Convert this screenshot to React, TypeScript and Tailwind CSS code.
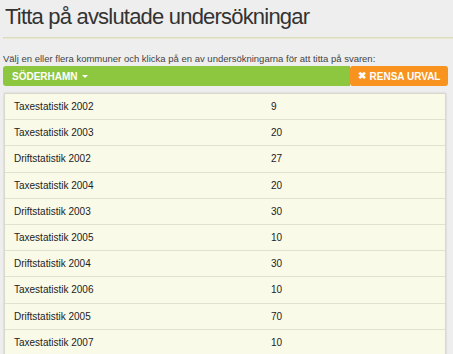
import React from 'react';

interface Survey {
  name: string;
  count: number;
}

const surveys: Survey[] = [
  { name: 'Taxestatistik 2002', count: 9 },
  { name: 'Taxestatistik 2003', count: 20 },
  { name: 'Driftstatistik 2002', count: 27 },
  { name: 'Taxestatistik 2004', count: 20 },
  { name: 'Driftstatistik 2003', count: 30 },
  { name: 'Taxestatistik 2005', count: 10 },
  { name: 'Driftstatistik 2004', count: 30 },
  { name: 'Taxestatistik 2006', count: 10 },
  { name: 'Driftstatistik 2005', count: 70 },
  { name: 'Taxestatistik 2007', count: 10 },
];

const App: React.FC = () => {
  return (
    <div className="h-[354px] w-[453px] overflow-hidden bg-[#eeeeee] font-['Liberation_Sans',Arial,sans-serif] text-[#333]">
      <h1 className="pl-[5px] pt-[2px] text-[22px] font-normal leading-[30px] tracking-[-0.8px] text-[#333]">
        Titta på avslutade undersökningar
      </h1>
      <div className="ml-[3px] mt-[5px] h-[2px] border-t border-[#dcdcbf] bg-[#e6e7cc]" />
      <p className="mt-[14px] pl-[3px] text-[9.5px] leading-[12px] text-[#444]">
        Välj en eller flera kommuner och klicka på en av undersökningarna för att titta på svaren:
      </p>
      <div className="ml-[3px] mr-[5px] mt-[1px] flex h-[20px]">
        <button
          type="button"
          className="flex flex-1 items-center rounded-l-[3px] bg-[#8dc63f] pl-[9px] text-[10px] font-bold text-white"
        >
          SÖDERHAMN
          <span className="ml-[4px] inline-block h-0 w-0 border-x-[3px] border-t-[3px] border-x-transparent border-t-white" />
        </button>
        <button
          type="button"
          className="flex w-[98px] items-center justify-center gap-[4px] rounded-[3px] bg-[#f7931e] text-[10px] font-bold text-white"
        >
          <span className="text-[10px] leading-none">✖</span>
          RENSA URVAL
        </button>
      </div>
      <div className="ml-[4px] mr-[7px] mt-[7px] border border-[#d8d8cc] bg-[#fafae9] shadow-[0_0_2px_rgba(0,0,0,0.15)]">
        {surveys.map((s, i) => (
          <div
            key={i}
            className="flex h-[26.2px] items-center border-b border-[#e2e1cf] text-[10px] text-[#222]"
          >
            <span className="w-[266px] pl-[9px]">{s.name}</span>
            <span>{s.count}</span>
          </div>
        ))}
      </div>
    </div>
  );
};

export default App;
